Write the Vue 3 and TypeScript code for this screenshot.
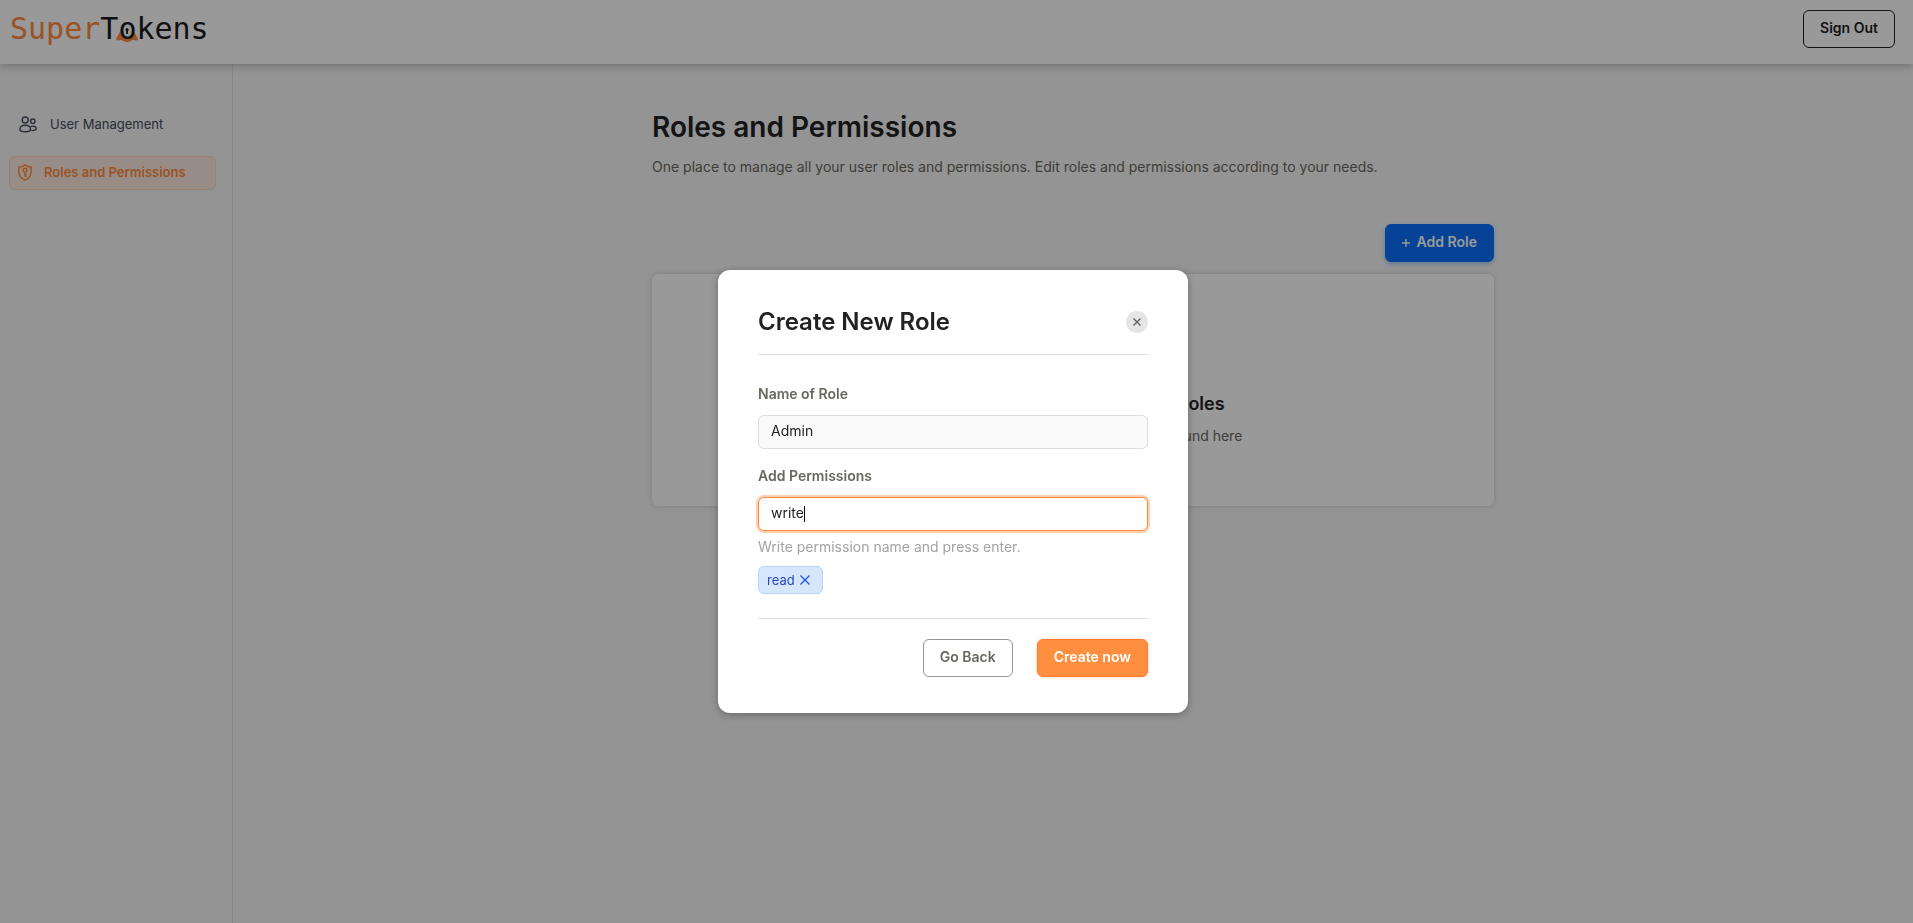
<script setup lang="ts">
import { computed, onMounted, ref } from 'vue'

const roleName = ref('Admin')
const permission = ref('write')
const permissions = ref<string[]>(['read'])
const permissionInput = ref<HTMLInputElement | null>(null)

const pen = document.createElement('canvas').getContext('2d')
const caretStyle = computed(() => {
  if (!pen) return {}
  pen.font = '400 14px Inter'
  return { left: `${13 + Math.round(pen.measureText(permission.value).width)}px` }
})

function addPermission() {
  const name = permission.value.trim()
  if (name && !permissions.value.includes(name)) permissions.value.push(name)
  permission.value = ''
}

function removePermission(name: string) {
  permissions.value = permissions.value.filter((p) => p !== name)
}

onMounted(() => permissionInput.value?.focus())
</script>

<template>
  <div class="page">
    <header class="topbar">
      <a class="logo" href="#" aria-label="SuperTokens">
        <span class="logo-super">Super</span><span>T</span><span class="logo-lock"><svg class="lock-base" viewBox="0 0 22 18" aria-hidden="true">
          <path class="lock-shape" d="M5 6 L0 15 Q1 17.500 4 16 Q6 15.500 7.500 17 Q11 19 14.500 17 Q16 15.500 18 16 Q21 17.500 22 15 L17 6 Z" />
          <ellipse class="lock-hole" cx="11" cy="6.500" rx="5" ry="7" />
          <path class="lock-key" d="M11 4 A1.800 1.800 0 0 1 12 7.200 V10 H10.200 V7.200 A1.800 1.800 0 0 1 11 4 Z" />
        </svg><span class="lock-letter">o</span></span><span>kens</span>
      </a>
      <button class="btn btn-outline-dark" type="button">Sign Out</button>
    </header>

    <div class="body">
      <nav class="sidebar">
        <a class="nav-item" href="#">
          <svg class="icon-users" viewBox="0 0 18 17" aria-hidden="true">
            <circle cx="6.2" cy="4" r="3" />
            <circle cx="13.8" cy="5.2" r="2.2" />
            <path d="M.9 13.200C.9 10.800 3.200 9.200 6.200 9.200s5.300 1.600 5.300 4c0 1.800-1.600 2.500-5.300 2.500S.9 15 .9 13.200Z" />
            <path d="M11.400 10.700c.7-.4 1.500-.6 2.400-.6 2 0 3.400 1.200 3.400 2.700 0 1.300-1.600 1.800-5 1.800" />
          </svg>
          <span>User Management</span>
        </a>
        <a class="nav-item active" href="#" aria-current="page">
          <svg class="icon-shield" viewBox="0 0 14 17" aria-hidden="true">
            <path d="M7 .9 C8.800 2.300 10.800 3 13.100 3.100 V8 C13.100 11.800 10.800 14.500 7 16.100 C3.200 14.500 .9 11.800 .9 8 V3.100 C3.200 3 5.200 2.300 7 .9 Z" />
            <circle cx="7" cy="6.200" r="1.900" />
            <path d="M7 8.200 V13 M7 10.400 H8.500 M7 12.300 H8.500" />
          </svg>
          <span>Roles and Permissions</span>
        </a>
      </nav>

      <main class="content">
        <div class="column">
          <h1>Roles and Permissions</h1>
          <p class="lead">One place to manage all your user roles and permissions. Edit roles and permissions according to your needs.</p>
          <div class="actions">
            <button class="btn btn-blue" type="button">
              <svg class="icon-plus" viewBox="0 0 8 8" aria-hidden="true"><path d="M4 0V8M0 4H8" /></svg>
              Add Role
            </button>
          </div>
          <section class="card">
            <h2>Currently you don't have any Roles</h2>
            <p>All the user roles that you create can be found here</p>
          </section>
        </div>
      </main>
    </div>

    <div class="overlay">
      <form class="modal" role="dialog" aria-labelledby="modal-title" @submit.prevent>
        <div class="modal-head">
          <h2 id="modal-title">Create New Role</h2>
          <button class="close" type="button" aria-label="Close">
            <svg viewBox="0 0 8 8" aria-hidden="true"><path d="M.5 .5L7.500 7.500M7.500 .5L.5 7.500" /></svg>
          </button>
        </div>
        <div class="modal-body">
          <div class="field">
            <label for="role-name">Name of Role</label>
            <input id="role-name" v-model="roleName" type="text" />
          </div>
          <div class="field">
            <label for="permission">Add Permissions</label>
            <div class="caret-box">
              <input id="permission" ref="permissionInput" v-model="permission" class="focused" type="text" autocomplete="off" @keydown.enter.prevent="addPermission" />
              <i class="caret" :style="caretStyle"></i>
            </div>
          </div>
          <p class="hint">Write permission name and press enter.</p>
          <div class="chips">
            <span v-for="name in permissions" :key="name" class="chip">
              {{ name }}
              <button type="button" :aria-label="`Remove ${name}`" @click="removePermission(name)">
                <svg viewBox="0 0 10 10" aria-hidden="true"><path d="M.5 .5L9.500 9.500M9.500 .5L.5 9.500" /></svg>
              </button>
            </span>
          </div>
        </div>
        <div class="modal-foot">
          <button class="btn btn-outline" type="button">Go Back</button>
          <button class="btn btn-orange" type="submit">Create now</button>
        </div>
      </form>
    </div>
  </div>
</template>

<style>
body {
  background: #f7f7f7;
}
</style>

<style scoped>
* {
  box-sizing: border-box;
}

h1,
h2,
p {
  margin: 0;
}

.page {
  display: flex;
  flex-direction: column;
  min-height: 100vh;
  color: #222;
  font: 400 14px/20px Inter, Roboto, sans-serif;
}

button,
input {
  font: inherit;
}

svg {
  display: block;
  fill: none;
  stroke: currentColor;
}

.topbar {
  position: relative;
  display: flex;
  align-items: flex-start;
  justify-content: space-between;
  height: 64px;
  padding: 10px 18px 0 10px;
  background: #fff;
  box-shadow: 0 2px 8px rgba(0, 0, 0, 0.25);
}

.logo {
  display: flex;
  color: #1c1c1c;
  font: 400 30px/38px "DejaVu Sans Mono", monospace;
  text-decoration: none;
}

.logo-super {
  color: #ff8a3c;
}

.logo-lock {
  position: relative;
}

.lock-letter {
  position: relative;
}

.lock-base {
  position: absolute;
  top: 14px;
  left: -2px;
  width: 22px;
  height: 18px;
  stroke: none;
}

.lock-shape {
  fill: #ff8a3c;
}

.lock-hole {
  fill: #fff;
}

.lock-key {
  fill: #1c1c1c;
}

.btn {
  display: flex;
  align-items: center;
  height: 38px;
  padding: 0 16px 2px;
  border: 1px solid;
  border-radius: 6px;
  font-weight: 600;
  cursor: pointer;
}

.btn-outline-dark {
  border-color: #222;
  background: #fff;
  color: #222;
}

.body {
  display: flex;
  flex: 1;
}

.sidebar {
  display: flex;
  flex: 0 0 233px;
  flex-direction: column;
  gap: 14px;
  padding: 44px 16px 0 9px;
  border-right: 1px solid #e0e0e5;
}

.nav-item {
  display: flex;
  align-items: center;
  gap: 13px;
  height: 34px;
  padding: 0 9px 2px;
  border: 1px solid transparent;
  border-radius: 6px;
  color: #474d5c;
  font-size: 13px;
  text-decoration: none;
}

.nav-item.active {
  gap: 12px;
  padding: 0 8px 2px;
  border-color: #ffd6bd;
  background: #fdebe0;
  color: #ff8a3c;
  font-weight: 600;
}

.icon-users {
  width: 18px;
  height: 17px;
  stroke-width: 1.4;
}

.icon-shield {
  width: 14px;
  height: 17px;
  stroke-width: 1.4;
}

.content {
  flex: 1;
  padding: 46px 32px;
}

.column {
  max-width: 842px;
  margin: 0 auto;
}

h1 {
  font-size: 28px;
  font-weight: 600;
  line-height: 34px;
}

.lead {
  margin-top: 13px;
  color: #6a6761;
}

.actions {
  display: flex;
  justify-content: flex-end;
  margin: 47px 0 12px;
}

.btn-blue {
  gap: 7px;
  border-color: #0a71fa;
  background: #0a71fa;
  box-shadow: 0 2px 5px rgba(10, 113, 250, 0.35);
  color: #fff;
}

.icon-plus {
  width: 8px;
  height: 8px;
  margin-top: 2px;
  stroke-width: 1.4;
}

.card {
  display: flex;
  flex-direction: column;
  align-items: center;
  gap: 10px;
  padding: 118px 24px 60px;
  border-radius: 6px;
  background: #fff;
  box-shadow: 0 0 6px rgba(0, 0, 0, 0.16);
}

.card h2 {
  font-size: 18px;
  font-weight: 600;
  line-height: 24px;
}

.card p {
  color: #6a6761;
}

.overlay {
  position: fixed;
  inset: 0;
  display: flex;
  align-items: center;
  justify-content: center;
  padding: 60px 7px 0 0;
  background: rgba(0, 0, 0, 0.4);
}

.modal {
  width: 470px;
  padding: 36px 40px;
  border-radius: 12px;
  background: #fff;
  box-shadow: 0 2px 8px rgba(0, 0, 0, 0.3);
}

.modal-head {
  display: flex;
  align-items: center;
  justify-content: space-between;
  padding-bottom: 16px;
  border-bottom: 1px solid #ddd;
}

.modal-head h2 {
  font-size: 24px;
  font-weight: 600;
  line-height: 32px;
}

.close {
  display: grid;
  place-items: center;
  width: 22px;
  height: 22px;
  padding: 0;
  border: 0;
  border-radius: 50%;
  background: #e5e5e5;
  color: #66625c;
  cursor: pointer;
}

.close svg {
  width: 8px;
  height: 8px;
  stroke-width: 1.4;
}

.modal-body {
  padding: 29px 0 24px;
  border-bottom: 1px solid #ddd;
}

.field + .field {
  margin-top: 17px;
}

.field label {
  display: block;
  margin-bottom: 11px;
  color: #6a6761;
  font-weight: 600;
}

.field input {
  display: block;
  width: 100%;
  height: 34px;
  padding: 0 12px 3px;
  border: 1px solid #ddd;
  border-radius: 6px;
  outline: none;
  background: #fafafa;
  color: #222;
}

.field input.focused {
  border-color: #ff8a3c;
  background: #fff;
  box-shadow: 0 0 0 2px #ffd0b1;
  caret-color: transparent;
}

.caret-box {
  position: relative;
}

.caret {
  position: absolute;
  top: 9px;
  width: 1px;
  height: 16px;
  background: #000;
}

.hint {
  margin-top: 6px;
  color: #a3a3a3;
}

.chips {
  display: flex;
  flex-wrap: wrap;
  gap: 8px;
  margin-top: 9px;
}

.chip {
  display: flex;
  align-items: center;
  gap: 5px;
  height: 28px;
  padding: 0 12px 0 8px;
  border: 1px solid #b0d4fb;
  border-radius: 6px;
  background: #d7e7fb;
  color: #2449c8;
  font-size: 13px;
}

.chip button {
  padding: 0;
  border: 0;
  background: none;
  color: #2457dc;
  cursor: pointer;
}

.chip svg {
  width: 10px;
  height: 10px;
  stroke-width: 1.4;
}

.modal-foot {
  display: flex;
  justify-content: flex-end;
  gap: 24px;
  padding-top: 20px;
}

.btn-outline {
  border-color: #949494;
  background: #fff;
  color: #6a6761;
}

.btn-orange {
  border-color: #ff7a2e;
  background: #ff8e3e;
  box-shadow: 0 0 4px rgba(255, 142, 62, 0.3);
  color: #fff;
}
</style>
